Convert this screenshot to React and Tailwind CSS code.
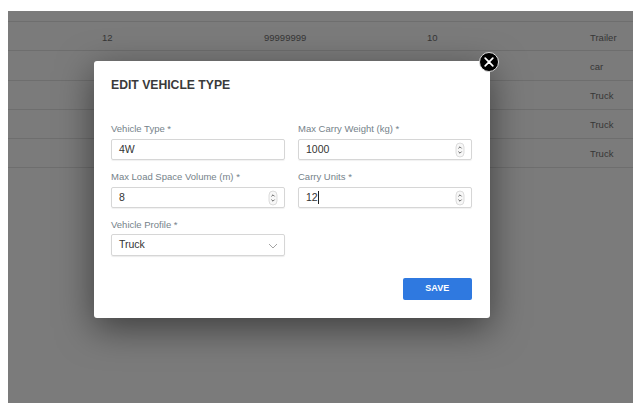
import React from 'react';

const rows = [
  ['555', '555', '555', 'Truck'],
  ['12', '99999999', '10', 'Trailer'],
  ['', '', '', 'car'],
  ['', '', '', 'Truck'],
  ['', '', '', 'Truck'],
  ['', '', '', 'Truck'],
];

const Spinner = () => (
  <svg width="10" height="16" viewBox="0 0 10 16" className="shrink-0" fill="none">
    <rect x="1" y="1" width="8" height="14" rx="4" fill="#f7f7f7" stroke="#d4d4d4" strokeWidth="0.8" />
    <path d="M3.4 6.4 5 4.8 6.6 6.4" stroke="#555" strokeWidth="0.9" />
    <path d="M3.4 9.6 5 11.2 6.6 9.6" stroke="#555" strokeWidth="0.9" />
  </svg>
);

const Field = ({ label, value, spinner, caret }) => (
  <div className="w-[174px]">
    <label className="block h-[15px] text-[9.5px] leading-[15px] text-[#75828a]">{label}</label>
    <div className="mt-[3px] flex h-[21px] items-center justify-between rounded-[2px] border border-[#d6d6d6] pl-[7px] pr-[6px] shadow-[0_1px_1px_rgba(0,0,0,0.06)]">
      <span className="flex items-center text-[10.5px] font-medium text-[#333]">
        {value}
        {caret && <span className="ml-[0.5px] h-[13px] w-px bg-[#222]"></span>}
      </span>
      {spinner && <Spinner />}
    </div>
  </div>
);

const App = () => {
  return (
    <div className="h-[419px] w-[643px] bg-white pl-[8px] pt-[11px] font-['Liberation_Sans',Arial,sans-serif]">
      <div className="relative h-[392px] w-[625px] overflow-hidden bg-[#7b7b7b]">
        {/* Table behind the overlay */}
        <div className="-mt-[18px]">
          {rows.map((row, index) => (
            <div
              key={index}
              className="grid h-[29.2px] grid-cols-[162px_163px_163px_1fr] items-center border-b border-[#6e6e6e] pl-[94px] pt-[3px] text-[9.5px] text-[#363636]"
            >
              <span>{row[0]}</span>
              <span>{row[1]}</span>
              <span>{row[2]}</span>
              <span>{row[3]}</span>
            </div>
          ))}
        </div>

        {/* Modal */}
        <div className="absolute left-[86px] top-[50px] h-[257px] w-[396px] rounded-[3px] bg-white px-[17px] pt-[17px] shadow-[0_10px_36px_rgba(0,0,0,0.5)]">
          <h2 className="text-[12.2px] font-bold leading-[15px] text-[#3a3a3a]">EDIT VEHICLE TYPE</h2>
          <div className="mt-[28px] grid grid-cols-[174px_174px] gap-x-[13px] gap-y-[9px]">
            <Field label="Vehicle Type *" value="4W" />
            <Field label="Max Carry Weight (kg) *" value="1000" spinner />
            <Field label="Max Load Space Volume (m) *" value="8" spinner />
            <Field label="Carry Units *" value="12" spinner caret />
            <div className="w-[174px]">
              <label className="block h-[15px] text-[9.5px] leading-[15px] text-[#75828a]">Vehicle Profile *</label>
              <div className="mt-[2px] flex h-[22px] items-center justify-between rounded-[2px] border border-[#d6d6d6] pl-[7px] pr-[6px] shadow-[0_1px_1px_rgba(0,0,0,0.08)]">
                <span className="text-[10.5px] text-[#333]">Truck</span>
                <svg width="10" height="6" viewBox="0 0 10 6" fill="none" className="mt-[2px]">
                  <path d="M1 1 5 5 9 1" stroke="#9a9a9a" strokeWidth="0.9" />
                </svg>
              </div>
            </div>
          </div>
          <div className="mt-[22px] flex justify-end pr-[1px]">
            <button className="h-[22px] w-[69.5px] rounded-[2px] bg-[#2f79e0] text-[9px] font-bold text-white">SAVE</button>
          </div>
        </div>

        {/* Close button */}
        <div className="absolute left-[471px] top-[41px] flex h-[20px] w-[20px] items-center justify-center rounded-full border border-[#ddd] bg-black">
          <svg width="10" height="10" viewBox="0 0 10 10" fill="none">
            <path d="M1.2 1.2 8.8 8.8M8.8 1.2 1.2 8.8" stroke="white" strokeWidth="1.7" strokeLinecap="round" />
          </svg>
        </div>
      </div>
    </div>
  );
};

export default App;
